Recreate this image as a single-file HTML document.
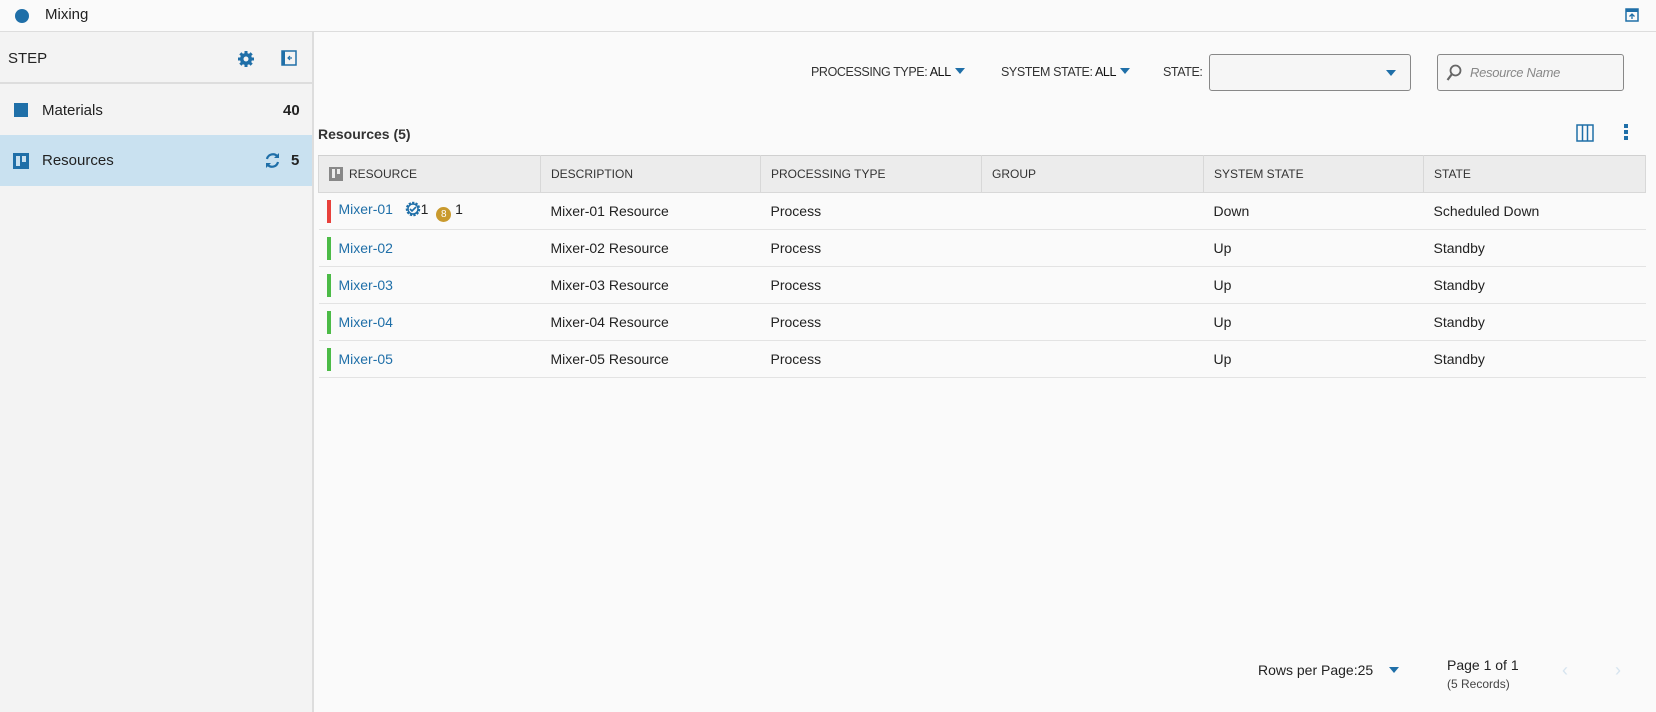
<!DOCTYPE html>
<html><head><style>
*{box-sizing:border-box;margin:0;padding:0}
body{width:1656px;height:712px;overflow:hidden;background:#fafafa;font-family:"Liberation Sans",sans-serif;color:#222;font-size:14px;position:relative}
.a{position:absolute}
.top{left:0;top:0;width:1656px;height:32px;background:#fafafa;border-bottom:1px solid #ddd}
.side{left:0;top:32px;width:314px;height:680px;background:#f3f3f3;border-right:2px solid #ddd}
.link{color:#1f6fa8}
th,td{text-align:left;font-weight:normal}
table{border-collapse:collapse;position:absolute;left:318px;top:155px;width:1328px;table-layout:fixed}
th{height:37px;background:#ececec;border:1px solid #d8d8d8;border-top:1px solid #d0d0d0;font-size:12px;padding-left:10px;color:#333}
td{height:37px;border-bottom:1px solid #e3e3e3;padding-left:10px;font-size:14px}
td:first-child{position:relative;padding-left:20px}
.bar{position:absolute;left:8px;top:7px;width:4px;height:23px}
.flt{font-size:12.5px;color:#333;letter-spacing:-0.4px}
.tri{display:inline-block;width:0;height:0;border-left:5px solid transparent;border-right:5px solid transparent;border-top:6px solid #1f6fa8;vertical-align:2px;margin-left:4px}
</style></head><body>
<div class="a top">
<div class="a" style="left:15px;top:9px;width:14px;height:14px;border-radius:50%;background:#1f6fa8"></div>
<div class="a" style="left:45px;top:6px;font-size:15px">Mixing</div>
<svg class="a" style="left:1625px;top:8px" width="14" height="14" viewBox="0 0 14 14"><rect x="1" y="1" width="12" height="12" fill="none" stroke="#1f6fa8" stroke-width="1.5"/><rect x="1" y="1" width="12" height="3" fill="#1f6fa8"/><path d="M7 11V6M4.5 8.5L7 6l2.5 2.5" stroke="#1f6fa8" stroke-width="1.3" fill="none"/></svg>
</div>
<div class="a side">
<div class="a" style="left:0;top:0;width:312px;height:52px;border-bottom:2px solid #ddd"></div>
<div class="a" style="left:8px;top:18px;font-size:15px">STEP</div>
<svg class="a" style="left:237px;top:18px" width="18" height="18" viewBox="0 0 18 18"><g fill="#1f6fa8"><circle cx="9" cy="9" r="6"/><rect x="7.5" y="1" width="3" height="16"/><rect x="1" y="7.5" width="16" height="3"/><rect x="7.5" y="1" width="3" height="16" transform="rotate(45 9 9)"/><rect x="7.5" y="1" width="3" height="16" transform="rotate(-45 9 9)"/></g><circle cx="9" cy="9" r="2.5" fill="#f3f3f3"/></svg>
<svg class="a" style="left:281px;top:18px" width="16" height="16" viewBox="0 0 16 16"><rect x="1" y="1" width="14" height="14" fill="none" stroke="#1f6fa8" stroke-width="1.5"/><rect x="1" y="1" width="3" height="14" fill="#1f6fa8"/><path d="M11 8H7M9 6L7 8l2 2" stroke="#1f6fa8" stroke-width="1.2" fill="none"/></svg>
<div class="a" style="left:14px;top:71px;width:14px;height:14px;background:#1f6fa8"></div>
<div class="a" style="left:42px;top:70px;font-size:15px">Materials</div>
<div class="a" style="left:283px;top:70px;font-size:15px;font-weight:bold">40</div>
<div class="a" style="left:0;top:103px;width:312px;height:51px;background:#c9e1f0"></div>
<div class="a" style="left:13px;top:121px;width:16px;height:16px;background:#1f6fa8"><div class="a" style="left:3px;top:3px;width:4px;height:10px;background:#c9e1f0"></div><div class="a" style="left:9px;top:3px;width:4px;height:6px;background:#c9e1f0"></div></div>
<div class="a" style="left:42px;top:120px;font-size:15px">Resources</div>
<svg class="a" style="left:264px;top:120px" width="17" height="17" viewBox="0 0 17 17"><path d="M3 7a6 6 0 0 1 10.5-2.5M14 10a6 6 0 0 1-10.5 2.5" stroke="#1f6fa8" stroke-width="2.2" fill="none"/><path d="M15 1v5h-5zM2 16v-5h5z" fill="#1f6fa8"/></svg>
<div class="a" style="left:291px;top:120px;font-size:15px;font-weight:bold">5</div>
</div>
<div class="a flt" style="left:811px;top:65px">PROCESSING TYPE: <span style="color:#111">ALL</span><span class="tri"></span></div>
<div class="a flt" style="left:1001px;top:65px">SYSTEM STATE: <span style="color:#111">ALL</span><span class="tri"></span></div>
<div class="a flt" style="left:1163px;top:65px">STATE:</div>
<div class="a" style="left:1209px;top:54px;width:202px;height:37px;border:1px solid #888;border-radius:3px;background:#f6f6f6"><span class="a tri" style="right:14px;top:15px"></span></div>
<div class="a" style="left:1437px;top:54px;width:187px;height:37px;border:1px solid #888;border-radius:3px;background:#f6f6f6">
<svg class="a" style="left:8px;top:9px" width="16" height="18" viewBox="0 0 16 18"><circle cx="9.5" cy="6.5" r="5" fill="none" stroke="#666" stroke-width="1.8"/><path d="M6 10L1.5 16" stroke="#666" stroke-width="2.2"/></svg>
<span class="a" style="left:32px;top:10px;font-style:italic;color:#888;font-size:13px;letter-spacing:-0.3px">Resource Name</span></div>
<div class="a" style="left:318px;top:126px;font-size:14px;font-weight:bold;color:#333">Resources (5)</div>
<svg class="a" style="left:1576px;top:124px" width="18" height="18" viewBox="0 0 18 18"><rect x="1" y="1" width="16" height="16" fill="none" stroke="#1f6fa8" stroke-width="1.5"/><path d="M6.5 1v16M11.5 1v16" stroke="#1f6fa8" stroke-width="1.5"/></svg>
<div class="a" style="left:1624px;top:124px;width:4px;height:4px;background:#1f6fa8;box-shadow:0 6px #1f6fa8,0 12px #1f6fa8"></div>
<table>
<colgroup><col style="width:222px"><col style="width:220px"><col style="width:221px"><col style="width:222px"><col style="width:220px"><col></colgroup>
<tr><th style="padding-left:10px"><span style="display:inline-block;width:14px;height:14px;background:#888;vertical-align:-3px;margin-right:6px;position:relative"><span style="position:absolute;left:3px;top:2px;width:3px;height:9px;background:#ececec"></span><span style="position:absolute;left:8px;top:2px;width:3px;height:5px;background:#ececec"></span></span>RESOURCE</th><th>DESCRIPTION</th><th>PROCESSING TYPE</th><th>GROUP</th><th>SYSTEM STATE</th><th>STATE</th></tr>
<tr><td><div class="bar" style="background:#e8413c"></div><span class="link">Mixer-01</span> &nbsp; <svg width="16" height="16" viewBox="0 0 16 16" style="vertical-align:-3px"><circle cx="8" cy="8" r="6" fill="none" stroke="#1f6fa8" stroke-width="2.5" stroke-dasharray="2.2 1.2"/><circle cx="8" cy="8" r="5" fill="none" stroke="#1f6fa8" stroke-width="1.5"/><path d="M5 8l2 2 4-4" stroke="#1f6fa8" stroke-width="1.6" fill="none"/></svg>1 &nbsp;<span style="display:inline-block;width:15px;height:15px;border-radius:50%;background:#c99a2e;color:#fff;font-size:10px;text-align:center;line-height:15px;vertical-align:-3px">8</span> 1</td><td>Mixer-01 Resource</td><td>Process</td><td></td><td>Down</td><td>Scheduled Down</td></tr>
<tr><td><div class="bar" style="background:#4cbb47"></div><span class="link">Mixer-02</span></td><td>Mixer-02 Resource</td><td>Process</td><td></td><td>Up</td><td>Standby</td></tr>
<tr><td><div class="bar" style="background:#4cbb47"></div><span class="link">Mixer-03</span></td><td>Mixer-03 Resource</td><td>Process</td><td></td><td>Up</td><td>Standby</td></tr>
<tr><td><div class="bar" style="background:#4cbb47"></div><span class="link">Mixer-04</span></td><td>Mixer-04 Resource</td><td>Process</td><td></td><td>Up</td><td>Standby</td></tr>
<tr><td><div class="bar" style="background:#4cbb47"></div><span class="link">Mixer-05</span></td><td>Mixer-05 Resource</td><td>Process</td><td></td><td>Up</td><td>Standby</td></tr>
</table>
<div class="a" style="left:1258px;top:662px;font-size:14px">Rows per Page:25 &nbsp;&nbsp;<span class="tri"></span></div>
<div class="a" style="left:1447px;top:657px;font-size:14px">Page 1 of 1</div>
<div class="a" style="left:1447px;top:677px;font-size:12px;color:#444">(5 Records)</div>
<div class="a" style="left:1562px;top:660px;color:#d6e4ef;font-size:18px">&#x2039;</div>
<div class="a" style="left:1615px;top:660px;color:#d6e4ef;font-size:18px">&#x203A;</div>
</body></html>
